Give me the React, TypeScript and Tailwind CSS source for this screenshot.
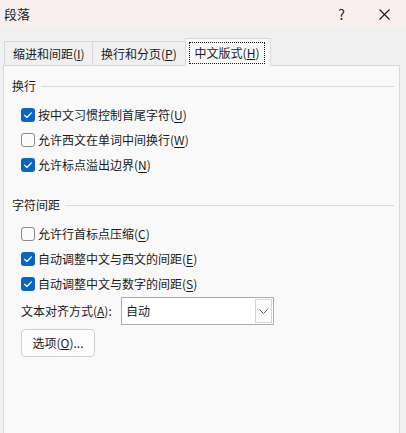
import React from "react";

const FONT = { fontFamily: '"Noto Sans CJK SC", "Noto Sans", sans-serif' };

function Check({ checked }: { checked: boolean }) {
  if (checked) {
    return (
      <span className="w-[14px] h-[14px] rounded-[3px] bg-[#0a64c2] flex items-center justify-center shrink-0">
        <svg width="14" height="14" viewBox="0 0 14 14">
          <polyline points="3.6,7.3 5.9,9.5 10.4,4.8" fill="none" stroke="#ffffff" strokeWidth="1.2" strokeLinecap="round" strokeLinejoin="round" />
        </svg>
      </span>
    );
  }
  return <span className="w-[14px] h-[14px] rounded-[3px] border border-[#8a8a8a] bg-[#fbfbfb] shrink-0" />;
}

function Row({ checked, text, k }: { checked: boolean; text: string; k: string }) {
  return (
    <div className="h-[25px] flex items-center pl-[17px]">
      <Check checked={checked} />
      <span className="ml-[3px] text-[12px] leading-[16px] text-[#1b1b1b]">
        {text}(<u className="underline-offset-2">{k}</u>)
      </span>
    </div>
  );
}

function Heading({ text }: { text: string }) {
  return (
    <div className="flex items-center pl-[8px] pr-[5px]">
      <span className="text-[12px] leading-[16px] text-[#1b1b1b]">{text}</span>
      <span className="ml-[5px] flex-1 h-px bg-[#dadada]" />
    </div>
  );
}

export default function App() {
  return (
    <div className="w-[406px] h-[433px] bg-[#f0f0f0] flex flex-col overflow-hidden" style={FONT}>
      <div className="h-[28px] bg-[#f9efee] flex items-center shrink-0">
        <span className="ml-[4px] text-[13px] leading-[16px] text-[#1b1b1b]">段落</span>
        <span className="ml-auto mr-[34px] text-[14px] leading-[16px] text-[#1b1b1b]">?</span>
        <svg className="mr-[16px]" width="11" height="11" viewBox="0 0 11 11">
          <path d="M0.5 0.5 L10.5 10.5 M10.5 0.5 L0.5 10.5" stroke="#1b1b1b" strokeWidth="1.1" />
        </svg>
      </div>
      <div className="flex items-end pl-[4px] pt-[10px] relative z-10 shrink-0">
        <div className="w-[89px] h-[24px] mb-px border-l border-t border-r border-[#d9d9d9] bg-[#f0f0f0] flex items-center pl-[8px] text-[12px] leading-[16px] text-[#1b1b1b]">
          缩进和间距(<u>I</u>)
        </div>
        <div className="w-[92px] h-[24px] mb-px border-t border-[#d9d9d9] bg-[#f0f0f0] flex items-center pl-[8px] text-[12px] leading-[16px] text-[#1b1b1b]">
          换行和分页(<u>P</u>)
        </div>
        <div className="w-[86px] h-[28px] border-l border-t border-r border-[#d9d9d9] bg-[#f9f9f9] flex items-start pt-[3px] pl-[3px]">
          <div className="w-[76px] h-[22px] border border-dotted border-[#1b1b1b] flex items-center justify-center text-[12px] leading-[16px] text-[#1b1b1b]">
            中文版式(<u>H</u>)
          </div>
        </div>
      </div>
      <div className="-mt-px ml-[3px] mr-[6px] h-[400px] shrink-0 border border-[#d9d9d9] bg-[#f9f9f9] flex flex-col pt-[12px]">
        <Heading text="换行" />
        <div className="mt-[8px] flex flex-col">
          <Row checked text="按中文习惯控制首尾字符" k="U" />
          <Row checked={false} text="允许西文在单词中间换行" k="W" />
          <Row checked text="允许标点溢出边界" k="N" />
        </div>
        <div className="mt-[20px]">
          <Heading text="字符间距" />
        </div>
        <div className="mt-[8px] flex flex-col">
          <Row checked={false} text="允许行首标点压缩" k="C" />
          <Row checked text="自动调整中文与西文的间距" k="E" />
          <Row checked text="自动调整中文与数字的间距" k="S" />
        </div>
        <div className="mt-[1px] h-[28px] flex items-center pl-[17px]">
          <span className="w-[100px] text-[12px] leading-[16px] text-[#1b1b1b]">
            文本对齐方式(<u>A</u>):
          </span>
          <div className="w-[153px] h-[28px] border border-[#ababab] bg-white flex items-stretch">
            <span className="flex-1 flex items-center pl-[4px] text-[12px] leading-[16px] text-[#1b1b1b]">自动</span>
            <span className="w-[17px] my-px mr-px border border-[#d4d4d4] bg-[#fdfdfd] flex items-center justify-center">
              <svg width="9" height="5" viewBox="0 0 9 5">
                <polyline points="0.5,0.5 4.5,4.5 8.5,0.5" fill="none" stroke="#606060" strokeWidth="1" />
              </svg>
            </span>
          </div>
        </div>
        <div className="mt-[4px] pl-[17px]">
          <div className="w-[74px] h-[28px] rounded-[4px] border border-[#d0d0d0] bg-[#fdfdfd] flex items-center justify-center text-[12px] leading-[16px] text-[#1b1b1b]">
            选项(<u>O</u>)...
          </div>
        </div>
      </div>
    </div>
  );
}
